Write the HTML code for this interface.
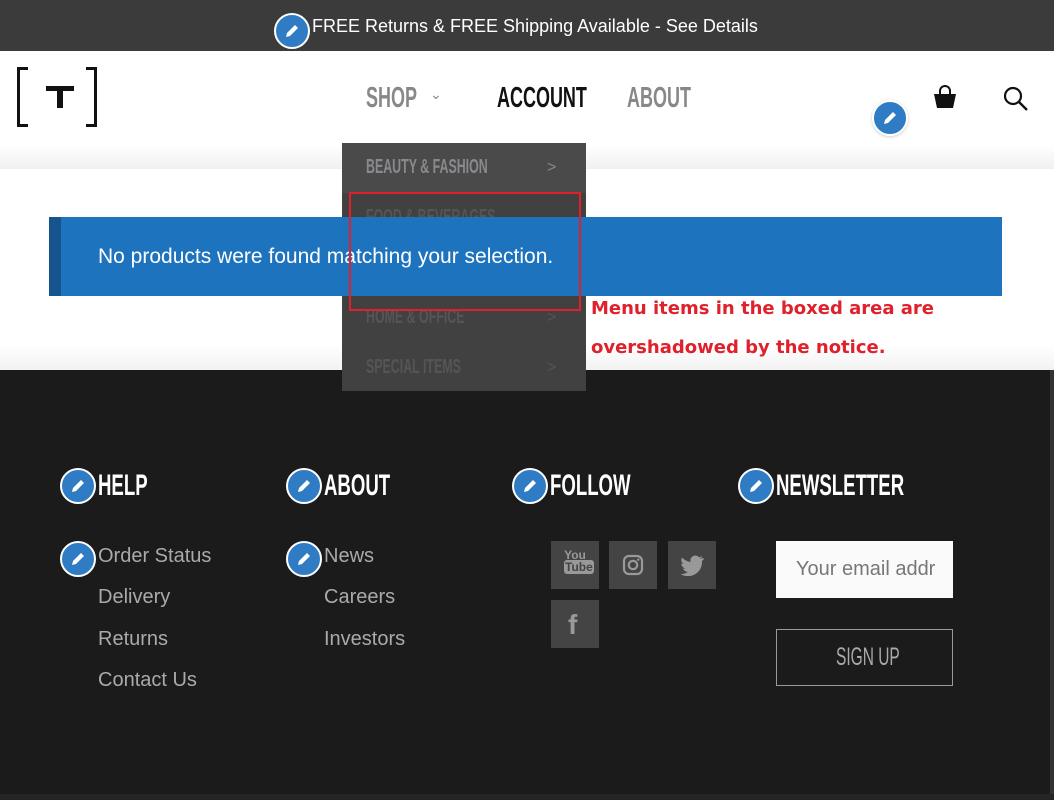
<!DOCTYPE html>
<html><head><meta charset="utf-8"><style>
*{margin:0;padding:0;box-sizing:border-box}
body{width:1054px;height:800px;position:relative;overflow:hidden;background:#fff;font-family:"Liberation Sans",sans-serif}
.a{position:absolute}
.c{display:inline-block;transform:scaleX(.62);transform-origin:0 50%;white-space:nowrap;font-family:"Liberation Sans",sans-serif;font-weight:bold}
.pen{position:absolute;width:36px;height:36px;border-radius:50%;background:#2f7cc4;border:2px solid #fff;}
.pen svg{position:absolute;left:8px;top:8px}
.ft{color:#aaa;font-size:20px;position:absolute}
.soc{position:absolute;width:48px;height:48px;background:#444}
.dd{position:absolute;left:24px;color:#8a8a8e;font-size:20px}
.ch{position:absolute;left:205px;color:#888;font-size:16px}
</style></head><body>
<div class="a" style="left:0;top:0;width:1054px;height:51px;background:#3b3b3b"></div>
<div class="a" style="left:312px;top:16px;color:#fff;font-size:18px">FREE Returns &amp; FREE Shipping Available - See Details</div>
<div class="pen" style="left:274px;top:13px"><svg width="16" height="16" viewBox="0 0 16 16"><path d="M2 14l1-4 8-8 3 3-8 8z" fill="#fff"/></svg></div>
<div class="a" style="left:0;top:145px;width:1054px;height:24px;background:linear-gradient(#fff,#f0f0f0)"></div>
<div class="a" style="left:17px;top:67px;width:80px;height:60px;border:3px solid #111;"></div>
<div class="a" style="left:28px;top:64px;width:58px;height:66px;background:#fff"></div>
<div class="a" style="left:46px;top:86px;width:28px;height:5px;background:#111"></div>
<div class="a" style="left:57px;top:86px;width:6px;height:22px;background:#111"></div>
<div class="a" style="left:366px;top:82px;font-size:29px;color:#888"><span class="c">SHOP</span></div>
<div class="a" style="left:430px;top:86px;color:#888;font-size:14px">&#8964;</div>
<div class="a" style="left:497px;top:82px;font-size:29px;color:#111"><span class="c">ACCOUNT</span></div>
<div class="a" style="left:627px;top:82px;font-size:29px;color:#888"><span class="c">ABOUT</span></div>
<svg class="a" style="left:932px;top:85px" width="26" height="26" viewBox="0 0 26 26"><path d="M8 9V6a5 5 0 0 1 10 0v3" fill="none" stroke="#111" stroke-width="2"/><path d="M2 9h22l-3 14H5z" fill="#111"/></svg>
<svg class="a" style="left:1003px;top:86px" width="26" height="26" viewBox="0 0 26 26"><circle cx="10" cy="10" r="8" fill="none" stroke="#111" stroke-width="2.2"/><path d="M16 16l8 8" stroke="#111" stroke-width="2.4"/></svg>
<div class="pen" style="left:872px;top:100px;box-shadow:0 1px 3px rgba(0,0,0,.2)"><svg width="16" height="16" viewBox="0 0 16 16"><path d="M2 14l1-4 8-8 3 3-8 8z" fill="#fff"/></svg></div>
<div class="a" style="left:0;top:345px;width:1054px;height:25px;background:linear-gradient(#fff,#f2f2f2)"></div>
<div class="a" style="left:0;top:370px;width:1054px;height:424px;background:#1b1b1b"></div>
<div class="a" style="left:0;top:794px;width:1054px;height:6px;background:#252525"></div>
<div class="a" style="left:1050px;top:370px;width:4px;height:424px;background:#333"></div>
<div class="a" style="left:342px;top:143px;width:244px;height:248px;background:#414141">
 <div class="a" style="left:0;top:0;width:244px;height:50px;background:#4a4a4a"></div>
 <div class="dd" style="top:13px"><span class="c">BEAUTY &amp; FASHION</span></div><div class="ch" style="top:16px">&gt;</div>
 <div class="dd" style="top:63px;color:#555"><span class="c">FOOD &amp; BEVERAGES</span></div>
 <div class="dd" style="top:163px;color:#555"><span class="c">HOME &amp; OFFICE</span></div><div class="ch" style="top:166px;color:#555">&gt;</div>
 <div class="dd" style="top:213px;color:#555"><span class="c">SPECIAL ITEMS</span></div><div class="ch" style="top:216px;color:#555">&gt;</div>
</div>
<div class="a" style="left:49px;top:217px;width:953px;height:79px;background:#1e73be;border-left:12px solid #15548c"></div>
<div class="a" style="left:98px;top:245px;color:#fff;font-size:21px">No products were found matching your selection.</div>
<div class="a" style="left:349px;top:192px;width:232px;height:119px;border:2px solid #e0202a"></div>
<div class="a" style="left:591px;top:289px;color:#e0202a;font-size:18px;font-weight:bold;font-family:'DejaVu Sans',sans-serif;line-height:39px">Menu items in the boxed area are<br>overshadowed by the notice.</div>
<div class="a" style="left:98px;top:469px;color:#fff;font-size:30px"><span class="c">HELP</span></div>
<div class="a" style="left:324px;top:469px;color:#fff;font-size:30px"><span class="c">ABOUT</span></div>
<div class="a" style="left:550px;top:469px;color:#fff;font-size:30px"><span class="c">FOLLOW</span></div>
<div class="a" style="left:776px;top:469px;color:#fff;font-size:30px"><span class="c">NEWSLETTER</span></div>
<div class="pen" style="left:60px;top:468px"><svg width="16" height="16" viewBox="0 0 16 16"><path d="M2 14l1-4 8-8 3 3-8 8z" fill="#fff"/></svg></div>
<div class="pen" style="left:286px;top:468px"><svg width="16" height="16" viewBox="0 0 16 16"><path d="M2 14l1-4 8-8 3 3-8 8z" fill="#fff"/></svg></div>
<div class="pen" style="left:512px;top:468px"><svg width="16" height="16" viewBox="0 0 16 16"><path d="M2 14l1-4 8-8 3 3-8 8z" fill="#fff"/></svg></div>
<div class="pen" style="left:738px;top:468px"><svg width="16" height="16" viewBox="0 0 16 16"><path d="M2 14l1-4 8-8 3 3-8 8z" fill="#fff"/></svg></div>
<div class="ft" style="left:98px;top:545px">Order Status</div>
<div class="ft" style="left:98px;top:586px">Delivery</div>
<div class="ft" style="left:98px;top:628px">Returns</div>
<div class="ft" style="left:98px;top:669px">Contact Us</div>
<div class="ft" style="left:324px;top:545px">News</div>
<div class="ft" style="left:324px;top:586px">Careers</div>
<div class="ft" style="left:324px;top:628px">Investors</div>
<div class="pen" style="left:60px;top:541px"><svg width="16" height="16" viewBox="0 0 16 16"><path d="M2 14l1-4 8-8 3 3-8 8z" fill="#fff"/></svg></div>
<div class="pen" style="left:286px;top:541px"><svg width="16" height="16" viewBox="0 0 16 16"><path d="M2 14l1-4 8-8 3 3-8 8z" fill="#fff"/></svg></div>
<div class="soc" style="left:551px;top:541px"><div class="a" style="left:13px;top:8px;color:#999;font-size:12px;font-weight:bold;line-height:12px;text-align:center;width:22px">You<br><span style="background:#999;color:#444;border-radius:3px;padding:0 1px">Tube</span></div></div>
<div class="soc" style="left:609px;top:541px"><svg class="a" style="left:13px;top:13px" width="22" height="22" viewBox="0 0 22 22"><rect x="2" y="2" width="18" height="18" rx="5" fill="none" stroke="#999" stroke-width="2.2"/><circle cx="11" cy="11" r="4.2" fill="none" stroke="#999" stroke-width="2.2"/><circle cx="16.3" cy="5.7" r="1.2" fill="#999"/></svg></div>
<div class="soc" style="left:668px;top:541px"><svg class="a" style="left:12px;top:13px" width="24" height="22" viewBox="0 0 24 20"><path d="M23 3c-1 .4-2 .6-3 .7 1-.6 2-1.6 2.3-2.7-1 .6-2 1-3.2 1.2A5 5 0 0 0 10.6 7 14 14 0 0 1 2 2.5a5 5 0 0 0 1.5 6.6c-.8 0-1.6-.3-2.2-.6 0 2.4 1.7 4.4 4 4.9-.7.2-1.5.2-2.2.1a5 5 0 0 0 4.6 3.4A10 10 0 0 1 .5 19 14 14 0 0 0 22 6.5V6c.8-.6 1.5-1.3 2-2z" fill="#999"/></svg></div>
<div class="soc" style="left:551px;top:600px"><div class="a" style="left:17px;top:9px;color:#999;font-size:28px;font-weight:bold">f</div></div>
<div class="a" style="left:776px;top:541px;width:177px;height:57px;background:#fafafa;overflow:hidden"><div class="a" style="left:20px;top:17px;color:#777;font-size:20px;white-space:nowrap">Your email addr</div></div>
<div class="a" style="left:776px;top:629px;width:177px;height:57px;border:1px solid #999"><div class="a" style="left:59px;top:13px;color:#aaa;font-size:25px"><span class="c" style="font-weight:normal">SIGN UP</span></div></div>
</body></html>
